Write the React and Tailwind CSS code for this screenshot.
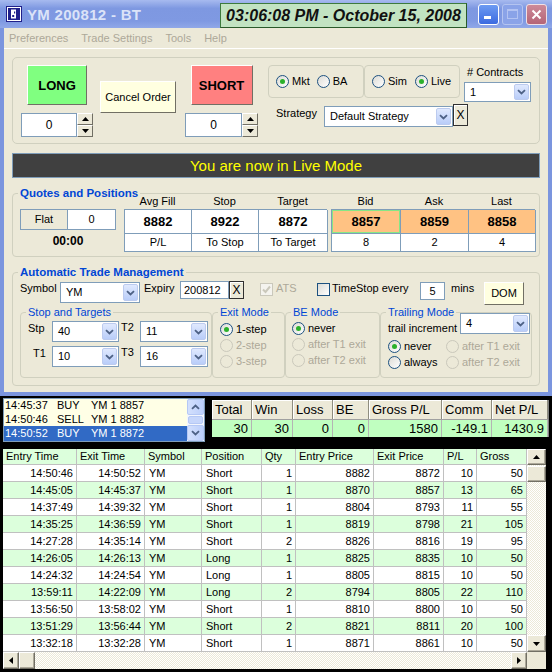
import React from "react"

const bevel = "border border-t-white border-l-white border-r-[#716f64] border-b-[#716f64]"
const field = "bg-white border border-[#7f9db9]"
const beige = "bg-[#ece9d8]"
const track = "bg-[repeating-conic-gradient(#ffffff_0_25%,#ece9d8_0_50%)] bg-[length:2px_2px]"

const Chevron = () => (
  <svg width="9" height="6" viewBox="0 0 9 6">
    <path d="M1 1.2l3.5 3.3L8 1.2" stroke="#4d6185" strokeWidth="1.8" fill="none" />
  </svg>
)

const Tri = ({ dir = "up" }) => {
  const pts = {
    up: "0,4 3.5,0 7,4",
    down: "0,0 7,0 3.5,4",
    left: "4,0 4,7 0,3.5",
    right: "0,0 0,7 4,3.5",
  }[dir]
  const vert = dir === "up" || dir === "down"
  return (
    <svg width={vert ? 7 : 4} height={vert ? 4 : 7} viewBox={vert ? "0 0 7 4" : "0 0 4 7"}>
      <polygon points={pts} fill="#000" />
    </svg>
  )
}

const Combo = ({ value, className = "" }) => (
  <div className={`flex ${field} ${className}`}>
    <span className="flex-1 flex items-center pl-[5px]">{value}</span>
    <span className="w-[15px] my-[1px] mr-[1px] rounded-[2px] border border-[#bccbef] bg-[linear-gradient(#e0e9fe,#b9cdf9)] flex items-center justify-center">
      <Chevron />
    </span>
  </div>
)

const Radio = ({ label, checked, disabled, className = "" }) => (
  <div className={`flex items-center h-[13px] ${disabled ? "text-[#aca899]" : "text-black"} ${className}`}>
    <span className={`w-[13px] h-[13px] rounded-full border flex items-center justify-center shrink-0 ${disabled ? "border-[#cac8bb]" : "border-[#1c5180] bg-[linear-gradient(135deg,#dcdbd5,#ffffff)]"}`}>
      {checked && <span className="w-[5px] h-[5px] rounded-full bg-[#2bb12b]" />}
    </span>
    <span className="ml-[3px] whitespace-nowrap">{label}</span>
  </div>
)

const Check = ({ checked, disabled }) => (
  <span className={`w-[13px] h-[13px] border flex items-center justify-center shrink-0 ${disabled ? "border-[#cac8bb] bg-[#f4f3ee]" : "border-[#1c5180] bg-[linear-gradient(135deg,#dcdbd5,#ffffff)]"}`}>
    {checked && (
      <svg width="9" height="9" viewBox="0 0 9 9">
        <path d="M1 4.5l2.5 2.5L8 1.5" stroke={disabled ? "#cac8bb" : "#21a121"} strokeWidth="2" fill="none" />
      </svg>
    )}
  </span>
)

const SpinBox = ({ className = "" }) => (
  <div className={`flex h-[24px] ${className}`}>
    <div className={`flex-1 ${field} flex items-center justify-center text-[12px]`}>0</div>
    <div className="w-[16px] flex flex-col">
      <div className={`flex-1 ${beige} ${bevel} flex items-center justify-center`}><Tri dir="up" /></div>
      <div className={`flex-1 ${beige} ${bevel} flex items-center justify-center`}><Tri dir="down" /></div>
    </div>
  </div>
)

const Group = ({ label, bold, className = "", children }) => (
  <div className={`border border-[#d0d0bf] rounded-[4px] flex flex-col ${className}`}>
    <span className={`-mt-[7px] ml-[5px] px-[2px] w-fit leading-[13px] bg-[#ece9d8] text-[#0046d5] whitespace-nowrap ${bold ? "font-bold text-[11.5px]" : ""}`}>
      {label}
    </span>
    {children}
  </div>
)

const XButton = ({ className = "" }) => (
  <div className={`${beige} border border-[#303030] shadow-[inset_1px_1px_0_#ffffff] flex items-center justify-center text-[12px] ${className}`}>X</div>
)

const quoteLeft = [
  { head: "Avg Fill", top: "8882", bottom: "P/L" },
  { head: "Stop", top: "8922", bottom: "To Stop" },
  { head: "Target", top: "8872", bottom: "To Target" },
]

const quoteRight = [
  { head: "Bid", top: "8857", bottom: "8", hot: true },
  { head: "Ask", top: "8859", bottom: "2" },
  { head: "Last", top: "8858", bottom: "4" },
]

const orders = [
  ["14:45:37", "BUY", "YM 1 8857"],
  ["14:50:46", "SELL", "YM 1 8882"],
  ["14:50:52", "BUY", "YM 1 8872"],
]

const stats = [
  { name: "Total", value: "30", w: "w-[40px]" },
  { name: "Win", value: "30", w: "w-[41px]" },
  { name: "Loss", value: "0", w: "w-[40px]" },
  { name: "BE", value: "0", w: "w-[36px]" },
  { name: "Gross P/L", value: "1580", w: "w-[73px]" },
  { name: "Comm", value: "-149.1", w: "w-[50px]" },
  { name: "Net P/L", value: "1430.9", w: "w-[56px]" },
]

const cols = [
  { name: "Entry Time", w: "w-[74px]", right: true },
  { name: "Exit Time", w: "w-[68px]", right: true },
  { name: "Symbol", w: "w-[57px]" },
  { name: "Position", w: "w-[60px]" },
  { name: "Qty", w: "w-[34px]", right: true },
  { name: "Entry Price", w: "w-[78px]", right: true },
  { name: "Exit Price", w: "w-[70px]", right: true },
  { name: "P/L", w: "w-[33px]", right: true },
  { name: "Gross", w: "w-[50px]", right: true },
]

const trades = [
  ["14:50:46", "14:50:52", "YM", "Short", 1, 8882, 8872, 10, 50],
  ["14:45:05", "14:45:37", "YM", "Short", 1, 8870, 8857, 13, 65],
  ["14:37:49", "14:39:32", "YM", "Short", 1, 8804, 8793, 11, 55],
  ["14:35:25", "14:36:59", "YM", "Short", 1, 8819, 8798, 21, 105],
  ["14:27:28", "14:35:14", "YM", "Short", 2, 8826, 8816, 19, 95],
  ["14:26:05", "14:26:13", "YM", "Long", 1, 8825, 8835, 10, 50],
  ["14:24:32", "14:24:54", "YM", "Long", 1, 8805, 8815, 10, 50],
  ["13:59:11", "14:22:09", "YM", "Long", 2, 8794, 8805, 22, 110],
  ["13:56:50", "13:58:02", "YM", "Short", 1, 8810, 8800, 10, 50],
  ["13:51:29", "13:56:44", "YM", "Short", 2, 8821, 8811, 20, 100],
  ["13:32:18", "13:32:28", "YM", "Short", 1, 8871, 8861, 10, 50],
]

const TitleBar = () => (
  <div className="h-[28px] flex items-center bg-[linear-gradient(#a7baef,#7e98e1_30%,#7f99e2_75%,#90a8e8)]">
    <svg className="ml-[6px] shrink-0" width="16" height="16" viewBox="0 0 16 16">
      <rect x="0" y="0" width="16" height="16" fill="#20208a" />
      <rect x="1.5" y="1.5" width="13" height="13" fill="none" stroke="#ffffff" />
      <path d="M5 3.5h5v9H5z" fill="#ffffff" />
      <path d="M8 5.5h1.2v2H8z" fill="#20208a" />
      <path d="M6.2 9h2v2h-2z" fill="#20208a" />
    </svg>
    <span className="ml-[5px] text-[15px] font-bold text-[#dbe3f8] tracking-[0.3px]">YM 200812 - BT</span>
    <div className="ml-auto self-start mt-[3px] w-[247px] h-[25px] bg-[#c2e3c2] border border-[#3d7a3d] border-r-[#2a5a2a] border-b-[#2a5a2a] flex items-center justify-center italic font-bold text-[16px] text-[#111]">
      03:06:08 PM - October 15, 2008
    </div>
    <div className="ml-[11px] mr-[5px] flex gap-[3px]">
      <div className="w-[21px] h-[21px] rounded-[3px] border border-white bg-[linear-gradient(#6d9af2,#3c6be0)] flex items-end pl-[5px] pb-[5px]">
        <span className="w-[7px] h-[3px] bg-white" />
      </div>
      <div className="w-[21px] h-[21px] rounded-[3px] border border-[#b4c4f0] bg-[#8aa3e8] flex items-center justify-center">
        <span className="w-[11px] h-[10px] border border-[#b3c3f2] border-t-2" />
      </div>
      <div className="w-[21px] h-[21px] rounded-[3px] border border-[#f0e0e4] bg-[linear-gradient(#cd8a98,#b56577)] flex items-center justify-center">
        <svg width="11" height="11" viewBox="0 0 11 11">
          <path d="M1.5 1.5l8 8M9.5 1.5l-8 8" stroke="#ffffff" strokeWidth="2" />
        </svg>
      </div>
    </div>
  </div>
)

const TopPanel = () => (
  <div className="mx-[8px] mt-[8px] h-[87px] border border-[#d0d0bf] rounded-[5px] flex items-start">
    <div className="ml-[8px] w-[72px] flex flex-col items-center">
      <div className={`mt-[7px] w-[60px] h-[40px] bg-[#80ff80] ${bevel} flex items-center justify-center font-bold text-[13px]`}>LONG</div>
      <SpinBox className="mt-[8px] w-[72px]" />
    </div>
    <div className={`ml-[7px] mt-[23px] w-[76px] h-[32px] bg-[#ffffe0] ${bevel} flex items-center justify-center`}>Cancel Order</div>
    <div className="ml-[9px] w-[73px] flex flex-col items-center">
      <div className={`mt-[7px] w-[62px] h-[40px] bg-[#ff8080] ${bevel} flex items-center justify-center font-bold text-[13px]`}>SHORT</div>
      <SpinBox className="mt-[8px] w-[73px]" />
    </div>
    <div className="ml-[10px] mt-[7px] flex flex-col">
      <div className="flex items-start">
        <div className="w-[96px] h-[33px] border border-[#d0d0bf] rounded-[4px] flex items-center pl-[7px]">
          <Radio checked label="Mkt" />
          <Radio label="BA" className="ml-[7px]" />
        </div>
        <div className="w-[96px] h-[33px] border border-[#d0d0bf] rounded-[4px] flex items-center pl-[7px]">
          <Radio label="Sim" />
          <Radio checked label="Live" className="ml-[8px]" />
        </div>
        <div className="ml-[4px] flex flex-col">
          <span className="pl-[3px] mt-[1px] leading-[13px] whitespace-nowrap"># Contracts</span>
          <Combo value="1" className="mt-[3px] w-[67px] h-[20px]" />
        </div>
      </div>
      <div className="flex items-start mt-[2px]">
        <span className="ml-[8px] mt-[3px] w-[48px]">Strategy</span>
        <Combo value="Default Strategy" className="mt-[2px] w-[129px] h-[21px]" />
        <XButton className="w-[15px] h-[22px]" />
      </div>
    </div>
  </div>
)

const QuoteTable = ({ items, widths, className = "" }) => (
  <div className={className}>
    <div className={`grid ${widths} h-[15px] items-center text-center`}>
      {items.map((c) => (
        <span key={c.head}>{c.head}</span>
      ))}
    </div>
    <div className={`grid ${widths} border-t border-l border-[#7f9db9]`}>
      {items.map((c) => (
        <div
          key={c.head + "t"}
          className={`h-[24px] border-r border-b border-[#7f9db9] flex items-center justify-center font-bold text-[13px] ${c.hot !== undefined || items === quoteRight ? "bg-[#ffc283]" : "bg-white"} ${c.hot ? "shadow-[inset_0_0_0_1px_#86e686]" : ""}`}
        >
          {c.top}
        </div>
      ))}
      {items.map((c) => (
        <div key={c.head + "b"} className="h-[18px] bg-white border-r border-b border-[#7f9db9] flex items-center justify-center">
          {c.bottom}
        </div>
      ))}
    </div>
  </div>
)

const Quotes = () => (
  <Group label="Quotes and Positions" bold className="mx-[8px] mt-[15px] h-[64px]">
    <div className="flex items-start -mt-[6px]">
      <div className="ml-[7px] mt-[15px] flex flex-col items-center">
        <div className="flex w-[96px] h-[21px] border border-[#7f9db9]">
          <div className="w-[47px] border-r border-[#7f9db9] flex items-center justify-center">Flat</div>
          <div className="flex-1 bg-white flex items-center justify-center">0</div>
        </div>
        <div className="mt-[5px] font-bold text-[12px]">00:00</div>
      </div>
      <QuoteTable items={quoteLeft} widths="grid-cols-[67px_67px_69px]" className="ml-[8px] w-[203px]" />
      <QuoteTable items={quoteRight} widths="grid-cols-[69px_68px_67px]" className="ml-[4px] w-[204px]" />
    </div>
  </Group>
)

const TradeManagement = () => (
  <Group label="Automatic Trade Management" bold className="mx-[8px] mt-[15px] h-[114px]">
    <div className="flex items-start mt-[2px]">
      <span className="w-[47px] pl-[7px] mt-[1px]">Symbol</span>
      <Combo value="YM" className="mt-[1px] w-[80px] h-[21px]" />
      <span className="w-[40px] pl-[4px] mt-[1px]">Expiry</span>
      <div className={`w-[49px] h-[18px] ${field} flex items-center pl-[3px]`}>200812</div>
      <XButton className="w-[15px] h-[18px]" />
      <span className="ml-[16px] mt-[2px]"><Check checked disabled /></span>
      <span className="ml-[3px] mt-[1px] w-[21px] text-[#aca899]">ATS</span>
      <span className="ml-[20px] mt-[2px]"><Check /></span>
      <span className="ml-[2px] mt-[1px] w-[88px] whitespace-nowrap">TimeStop every</span>
      <div className={`mt-[1px] w-[25px] h-[18px] ${field} flex items-center justify-center`}>5</div>
      <span className="ml-[6px] mt-[1px] w-[33px]">mins</span>
      <div className={`mt-[1px] w-[40px] h-[23px] bg-[#ffffe0] ${bevel} flex items-center justify-center`}>DOM</div>
    </div>
    <div className="flex mt-[7px] ml-[7px]">
      <Group label="Stop and Targets" className="w-[192px] h-[66px]">
        <div className="flex items-start mt-[2px]">
          <span className="w-[31px] pl-[7px] mt-[1px]">Stp</span>
          <Combo value="40" className="w-[67px] h-[21px]" />
          <span className="w-[21px] pl-[2px]">T2</span>
          <Combo value="11" className="w-[68px] h-[21px]" />
        </div>
        <div className="flex items-start mt-[4px]">
          <span className="w-[31px] pl-[12px] mt-[1px]">T1</span>
          <Combo value="10" className="w-[67px] h-[21px]" />
          <span className="w-[21px] pl-[2px]">T3</span>
          <Combo value="16" className="w-[68px] h-[21px]" />
        </div>
      </Group>
      <Group label="Exit Mode" className="w-[73px] h-[66px]">
        <div className="flex flex-col gap-[3px] mt-[4px] pl-[7px]">
          <Radio checked label="1-step" />
          <Radio disabled label="2-step" />
          <Radio disabled label="3-step" />
        </div>
      </Group>
      <Group label="BE Mode" className="w-[95px] h-[66px]">
        <div className="flex flex-col gap-[3px] mt-[3px] pl-[6px]">
          <Radio checked label="never" />
          <Radio disabled label="after T1 exit" />
          <Radio disabled label="after T2 exit" />
        </div>
      </Group>
      <Group label="Trailing Mode" className="w-[152px] h-[66px]">
        <div className="flex items-start -mt-[6px]">
          <span className="pl-[7px] mt-[9px] w-[79px] whitespace-nowrap">trail increment</span>
          <Combo value="4" className="w-[70px] h-[21px]" />
        </div>
        <div className="grid grid-cols-[58px_1fr] gap-y-[3px] mt-[5px] pl-[7px]">
          <Radio checked label="never" />
          <Radio disabled label="after T1 exit" />
          <Radio label="always" />
          <Radio disabled label="after T2 exit" />
        </div>
      </Group>
    </div>
  </Group>
)

const XpScrollBtn = ({ dir }) => (
  <div className="h-[16px] rounded-[2px] border border-[#b5c8f5] bg-[linear-gradient(90deg,#d3e0fd,#bccffb)] flex items-center justify-center">
    <svg width="9" height="6" viewBox="0 0 9 6">
      <path d={dir === "up" ? "M1 4.8l3.5-3.3L8 4.8" : "M1 1.2l3.5 3.3L8 1.2"} stroke="#4d6185" strokeWidth="1.8" fill="none" />
    </svg>
  </div>
)

const OrderList = () => (
  <div className="ml-[3px] w-[202px] h-[44px] bg-[#ffffe6] border border-[#7f9db9] flex">
    <div className="flex-1 flex flex-col">
      {orders.map((o, i) => (
        <div key={i} className={`h-[14px] flex items-center pl-[1px] text-[11px] ${i === 2 ? "bg-[#316ac5] text-white h-[15px]" : ""}`}>
          <span className="w-[52px]">{o[0]}</span>
          <span className="w-[34px]">{o[1]}</span>
          <span>{o[2]}</span>
        </div>
      ))}
    </div>
    <div className="w-[17px] flex flex-col bg-[#f3f6fd]">
      <XpScrollBtn dir="up" />
      <div className="flex-1 mx-[1px] my-[1px] rounded-[2px] border border-[#b5c8f5] bg-[#c6d6fb]" />
      <XpScrollBtn dir="down" />
    </div>
  </div>
)

const Stats = () => (
  <div className="ml-[7px] mt-[2px] w-[337px] flex flex-col border-r border-[#808080] text-[13px]">
    <div className={`h-[19px] flex ${beige}`}>
      {stats.map((s) => (
        <div key={s.name} className={`${s.w} h-full border-r border-[#8f8d80] shadow-[inset_1px_1px_0_#ffffff] pl-[3px] flex items-center whitespace-nowrap`}>
          {s.name}
        </div>
      ))}
    </div>
    <div className="h-[18px] flex bg-[#c0ffc0] border-t border-[#a0a0a0]">
      {stats.map((s) => (
        <div key={s.name} className={`${s.w} h-full border-r border-[#b4b4b4] pr-[3px] flex items-center justify-end`}>
          {s.value}
        </div>
      ))}
    </div>
  </div>
)

const ClassicBtn = ({ dir, className = "" }) => (
  <div className={`${beige} ${bevel} shadow-[inset_-1px_-1px_0_#aca899] flex items-center justify-center ${className}`}>
    <Tri dir={dir} />
  </div>
)

const TradesGrid = () => (
  <div className="ml-[3px] mt-[7px] w-[543px] flex flex-col">
    <div className="flex">
      <div className="w-[524px] flex flex-col bg-white text-[11px]">
        <div className="h-[16px] flex bg-[#dcffdc] border-b border-[#c0c0c0]">
          {cols.map((c) => (
            <div key={c.name} className={`${c.w} h-full border-r border-[#c0c0c0] pl-[3px] flex items-center whitespace-nowrap`}>
              {c.name}
            </div>
          ))}
        </div>
        {trades.map((t, i) => (
          <div key={i} className={`h-[17px] flex border-b border-[#c0c0c0] ${i % 2 === 1 ? "bg-[#dcffdc]" : "bg-white"}`}>
            {cols.map((c, j) => (
              <div key={c.name} className={`${c.w} h-full border-r border-[#c0c0c0] flex items-center ${c.right ? "justify-end pr-[3px]" : "pl-[4px]"}`}>
                {t[j]}
              </div>
            ))}
          </div>
        ))}
      </div>
      <div className={`w-[19px] flex flex-col ${track}`}>
        <ClassicBtn dir="up" className="h-[16px]" />
        <div className={`h-[16px] mt-[1px] ${beige} ${bevel} shadow-[inset_-1px_-1px_0_#aca899]`} />
        <div className="flex-1" />
        <ClassicBtn dir="down" className="h-[17px]" />
      </div>
    </div>
    <div className="h-[17px] flex">
      <div className={`w-[524px] flex ${track}`}>
        <ClassicBtn dir="left" className="w-[16px]" />
        <div className={`w-[16px] ${beige} ${bevel} shadow-[inset_-1px_-1px_0_#aca899]`} />
        <div className="flex-1" />
        <ClassicBtn dir="right" className="w-[16px]" />
      </div>
      <div className={`w-[19px] ${beige}`} />
    </div>
  </div>
)

const App = () => {
  return (
    <div className="w-[552px] h-[672px] overflow-hidden bg-black font-['Liberation_Sans',Arial,sans-serif] text-[11px] leading-[13px] text-black">
      {/* Main window */}
      <TitleBar />
      <div className={`h-[368px] ${beige} border-x-4 border-b-4 border-[#7b95de] flex flex-col`}>
        <div className="h-[21px] border-b border-white flex items-center pl-[5px] gap-[13px] text-[#aca899]">
          <span>Preferences</span>
          <span>Trade Settings</span>
          <span>Tools</span>
          <span>Help</span>
        </div>
        <TopPanel />
        <div className="mx-[8px] mt-[9px] h-[25px] bg-[#404040] border border-[#7f9db9] flex items-center justify-center text-[15px] text-[#ffff00]">
          You are now in Live Mode
        </div>
        <Quotes />
        <TradeManagement />
      </div>

      {/* Order log and stats */}
      <div className="flex items-start mt-[2px]">
        <OrderList />
        <Stats />
      </div>

      {/* Trades grid */}
      <TradesGrid />
    </div>
  )
}

export default App
